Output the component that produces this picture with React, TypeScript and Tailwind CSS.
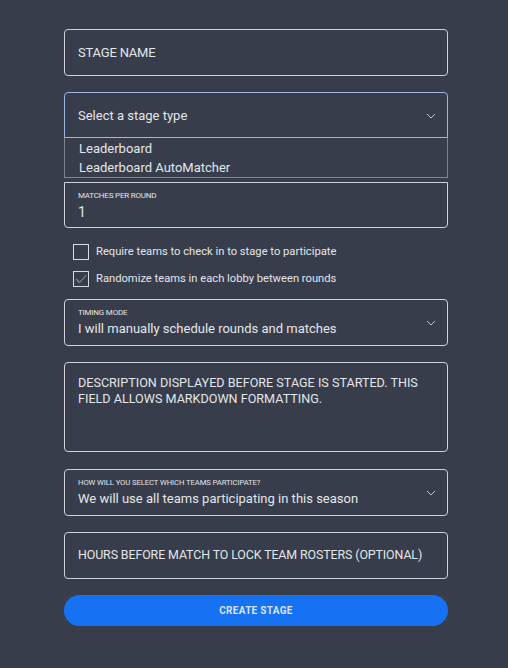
import React from "react";

const Chevron = () => (
  <svg width="10" height="6" viewBox="0 0 10 6" className="shrink-0">
    <path d="M1 1 L5 5 L9 1" fill="none" stroke="#c4c8cf" strokeWidth="1" />
  </svg>
);

const font = { fontFamily: "Roboto, 'Noto Sans', sans-serif" };

export default function App() {
  return (
    <div className="min-h-[668px] w-[508px] bg-[#373d4a] pt-[29px] text-[#e3e6eb]" style={font}>
      <div className="ml-[64px] w-[384px] flex flex-col">
        <div className="h-[47px] border border-[#cfd2d8] rounded-[4px] px-[13px] flex items-center text-[13px] tracking-[-0.2px]">
          STAGE NAME
        </div>

        <div className="mt-[16px] h-[46px] border border-[#9fb9e2] rounded-t-[4px] pl-[13px] pr-[11px] pt-[1px] flex items-center justify-between text-[13px]">
          <span>Select a stage type</span>
          <Chevron />
        </div>
        <div className="h-[40px] border-x border-b border-[#80848c] bg-[#373d4a] pl-[14px] flex flex-col justify-center text-[13px] leading-[19px]">
          <div>Leaderboard</div>
          <div>Leaderboard AutoMatcher</div>
        </div>

        <div className="mt-[4px] h-[46px] border border-[#cfd2d8] rounded-b-[4px] px-[13px] pt-[2px] flex flex-col justify-center">
          <div className="text-[8px] leading-[10px] tracking-[-0.2px]">MATCHES PER ROUND</div>
          <div className="text-[14px] leading-[18px] mt-[2px]">1</div>
        </div>

        <div className="mt-[16px] flex flex-col gap-[11px] pl-[9px]">
          <label className="flex items-center gap-[7px] text-[11.2px] leading-[16px]">
            <span className="w-[16px] h-[16px] border border-[#d8dbe0] shrink-0" />
            <span>Require teams to check in to stage to participate</span>
          </label>
          <label className="flex items-center gap-[7px] text-[11.2px] leading-[16px]">
            <span className="w-[16px] h-[16px] border border-[#d8dbe0] shrink-0 flex items-center justify-center">
              <svg width="12" height="10" viewBox="0 0 12 10">
                <path d="M1 5 L4.5 8.5 L11 1.5" fill="none" stroke="#6f9e90" strokeWidth="1.1" />
              </svg>
            </span>
            <span>Randomize teams in each lobby between rounds</span>
          </label>
        </div>

        <div className="mt-[12px] h-[47px] border border-[#cfd2d8] rounded-[4px] pl-[13px] pr-[11px] flex items-center justify-between">
          <div className="flex flex-col">
            <div className="text-[8px] leading-[10px] tracking-[-0.2px]">TIMING MODE</div>
            <div className="text-[13px] leading-[18px] mt-[2px]">I will manually schedule rounds and matches</div>
          </div>
          <Chevron />
        </div>

        <div className="mt-[16px] h-[90px] border border-[#cfd2d8] rounded-[4px] px-[13px] pt-[12px] text-[12.6px] leading-[16px]">
          DESCRIPTION DISPLAYED BEFORE STAGE IS STARTED. THIS FIELD ALLOWS MARKDOWN FORMATTING.
        </div>

        <div className="mt-[17px] h-[47px] border border-[#cfd2d8] rounded-[4px] pl-[13px] pr-[11px] flex items-center justify-between">
          <div className="flex flex-col">
            <div className="text-[7.7px] leading-[10px] tracking-[-0.1px]">HOW WILL YOU SELECT WHICH TEAMS PARTICIPATE?</div>
            <div className="text-[13px] leading-[18px] mt-[2px]">We will use all teams participating in this season</div>
          </div>
          <Chevron />
        </div>

        <div className="mt-[16px] h-[47px] border border-[#cfd2d8] rounded-[4px] px-[13px] flex items-center text-[12.4px] tracking-[-0.1px] whitespace-nowrap">
          HOURS BEFORE MATCH TO LOCK TEAM ROSTERS (OPTIONAL)
        </div>

        <button className="mt-[16px] h-[31px] rounded-full bg-[#1672f3] text-[10px] font-bold tracking-[0.3px] text-[#dbe3f1]">
          CREATE STAGE
        </button>
      </div>
    </div>
  );
}
